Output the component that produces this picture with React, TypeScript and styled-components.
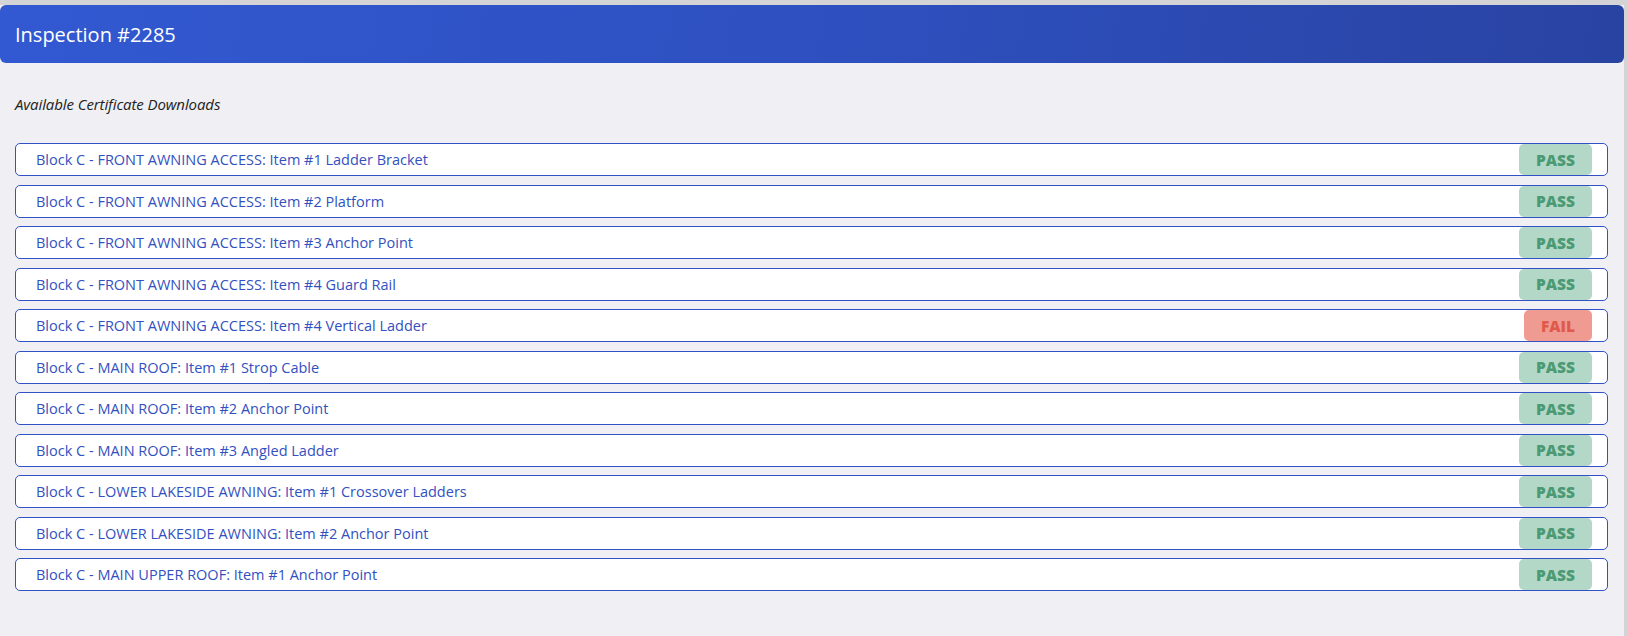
import React from 'react';
import styled, { createGlobalStyle } from 'styled-components';

type Result = 'PASS' | 'FAIL';

interface Certificate {
	title: string;
	result: Result;
}

const certificates: Certificate[] = [
	{ title: 'Block C - FRONT AWNING ACCESS: Item #1 Ladder Bracket', result: 'PASS' },
	{ title: 'Block C - FRONT AWNING ACCESS: Item #2 Platform', result: 'PASS' },
	{ title: 'Block C - FRONT AWNING ACCESS: Item #3 Anchor Point', result: 'PASS' },
	{ title: 'Block C - FRONT AWNING ACCESS: Item #4 Guard Rail', result: 'PASS' },
	{ title: 'Block C - FRONT AWNING ACCESS: Item #4 Vertical Ladder', result: 'FAIL' },
	{ title: 'Block C - MAIN ROOF: Item #1 Strop Cable', result: 'PASS' },
	{ title: 'Block C - MAIN ROOF: Item #2 Anchor Point', result: 'PASS' },
	{ title: 'Block C - MAIN ROOF: Item #3 Angled Ladder', result: 'PASS' },
	{ title: 'Block C - LOWER LAKESIDE AWNING: Item #1 Crossover Ladders', result: 'PASS' },
	{ title: 'Block C - LOWER LAKESIDE AWNING: Item #2 Anchor Point', result: 'PASS' },
	{ title: 'Block C - MAIN UPPER ROOF: Item #1 Anchor Point', result: 'PASS' },
];

const GlobalStyle = createGlobalStyle`
	* {
		box-sizing: border-box;
	}

	html,
	body {
		margin: 0;
		padding: 0;
		height: 100%;
		background-color: #d4d4d6;
		font-family: 'Open Sans', 'Noto Sans', sans-serif;
	}
`;

const Page = styled.div`
	margin: 5px 3px 0 0;
	min-height: calc(100vh - 5px);
	background-color: #efeff4;
`;

const Header = styled.header`
	display: flex;
	align-items: center;
	height: 58px;
	padding: 0 15px;
	border-radius: 6px;
	background: linear-gradient(100deg, #3259d2 0%, #2e50c0 50%, #2943a2 100%);
`;

const Title = styled.h1`
	margin: 0;
	font-size: 20px;
	font-weight: 400;
	color: #ffffff;
`;

const Content = styled.main`
	padding: 31px 16px 0 15px;
`;

const Caption = styled.p`
	margin: 0 0 29px;
	font-size: 15px;
	font-style: italic;
	line-height: 20px;
	letter-spacing: -0.1px;
	color: #222222;
`;

const List = styled.ul`
	display: flex;
	flex-direction: column;
	gap: 8.5px;
	margin: 0;
	padding: 0;
	list-style: none;
`;

const Row = styled.li`
	display: flex;
	align-items: center;
	justify-content: space-between;
	height: 33px;
	padding: 0 15px 0 20px;
	border: 1px solid #3151c6;
	border-radius: 5px;
	background-color: #ffffff;
`;

const RowTitle = styled.a`
	font-size: 14.5px;
	color: #3350c0;
	text-decoration: none;
	cursor: pointer;
`;

const Badge = styled.span<{ $result: Result }>`
	display: inline-flex;
	align-items: center;
	justify-content: center;
	height: 31px;
	padding: 0 17px;
	border-radius: 5px;
	font-size: 15.5px;
	font-weight: 800;
	color: ${props => (props.$result === 'PASS' ? '#4c9a73' : '#e05a4b')};
	background-color: ${props => (props.$result === 'PASS' ? '#b4d8c8' : '#ef9b91')};
`;

const App = () => {
	return (
		<>
			<GlobalStyle />
			<Page>
				<Header>
					<Title>Inspection #2285</Title>
				</Header>
				<Content>
					<Caption>Available Certificate Downloads</Caption>
					<List>
						{certificates.map(certificate => (
							<Row key={certificate.title}>
								<RowTitle>{certificate.title}</RowTitle>
								<Badge $result={certificate.result}>{certificate.result}</Badge>
							</Row>
						))}
					</List>
				</Content>
			</Page>
		</>
	);
};

export default App;
